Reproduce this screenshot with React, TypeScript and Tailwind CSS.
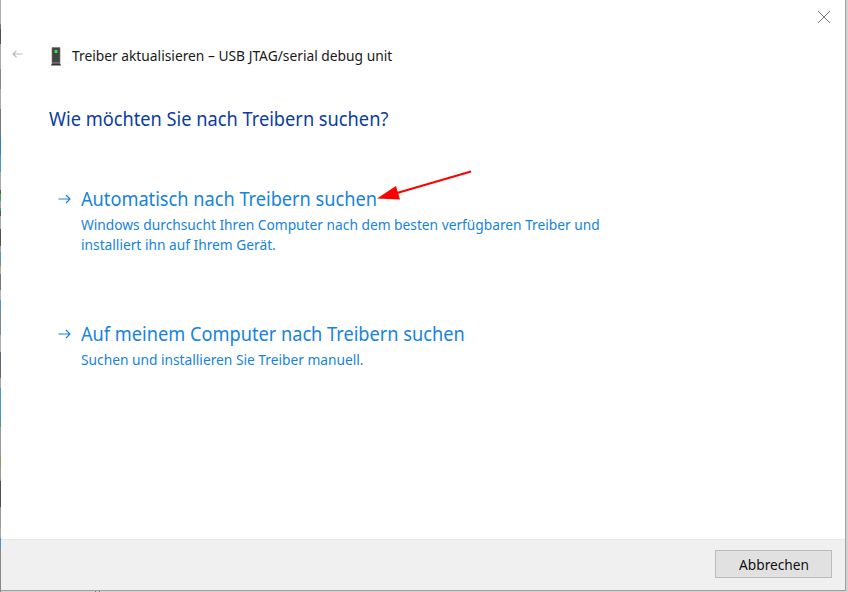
import React from "react";

const edge: [string, number][] = [
  ["bg-[#b0b0b0]", 24], ["bg-[#777777]", 5], ["bg-[#505050]", 15], ["bg-[#aaaaaa]", 25],
  ["bg-[#888888]", 20], ["bg-[#a8a8a8]", 20], ["bg-[#777777]", 27], ["bg-[#2f7fcc]", 19],
  ["bg-[#4b96ca]", 17], ["bg-[#a9a9a9]", 18], ["bg-[#555555]", 4], ["bg-[#3fae4b]", 7],
  ["bg-[#a0a0a0]", 7], ["bg-[#22ad66]", 3], ["bg-[#555555]", 5], ["bg-[#aaaaaa]", 13],
  ["bg-[#505050]", 17], ["bg-[#a0a0a0]", 6], ["bg-[#5596b8]", 14], ["bg-[#d4a52c]", 3],
  ["bg-[#b0b0b0]", 5], ["bg-[#777777]", 16], ["bg-[#b5b5b5]", 10], ["bg-[#4795cc]", 10],
  ["bg-[#7b8794]", 25], ["bg-[#b0b0b0]", 17], ["bg-[#606973]", 26], ["bg-[#a6a6a6]", 10],
  ["bg-[#4795cc]", 34], ["bg-[#45a157]", 5], ["bg-[#999999]", 30], ["bg-[#929969]", 10],
  ["bg-[#999999]", 12], ["bg-[#35c44a]", 2], ["bg-[#505050]", 26], ["bg-[#999999]", 20],
  ["bg-[#d0a02e]", 2], ["bg-[#aaaaaa]", 9], ["bg-[#4795cc]", 10], ["bg-[#888888]", 44],
];

function Arrow({ className }: { className: string }) {
  return (
    <svg className={className} width="13" height="10" viewBox="0 0 13 10" fill="none" stroke="currentColor" strokeWidth="1.1">
      <path d="M0.5 5H12M8 1L12 5L8 9" />
    </svg>
  );
}

function Option({ title, lines, className }: { title: string; lines: string[]; className: string }) {
  return (
    <button className={`flex items-start gap-[10px] text-left text-[#1683de] ${className}`}>
      <Arrow className="mt-[10px] shrink-0" />
      <span className="block whitespace-nowrap">
        <span className="block origin-left scale-x-[0.909] text-[20px] leading-[30px]">{title}</span>
        <span className="block origin-left scale-x-[0.948] text-[14.5px] leading-5">
          {lines.map((line) => (
            <span key={line} className="block">{line}</span>
          ))}
        </span>
      </span>
    </button>
  );
}

export default function App() {
  return (
    <div className="relative flex h-[592px] w-[848px] overflow-hidden bg-[#d2d2d2] font-['Noto_Sans','Open_Sans',sans-serif]">
      <div className="flex w-px shrink-0 flex-col">
        {edge.map(([color, height], i) => (
          <div key={i} className={`shrink-0 ${color}`} style={{ height }} />
        ))}
      </div>
      <div className="flex w-[845px] shrink-0 flex-col">
        <div className="flex h-[591px] flex-col border-r border-b border-[#a0a0a0] bg-white">
          <div className="flex h-[34px] justify-end pt-[11px] pr-[15px]">
            <svg width="12" height="12" viewBox="0 0 12 12" fill="none" stroke="#777" strokeWidth="1">
              <path d="M0 0L12 12M12 0L0 12" />
            </svg>
          </div>
          <header className="flex h-11 items-center pl-[11px]">
            <svg className="-mt-1" width="11" height="8" viewBox="0 0 11 8" fill="none" stroke="#bcbcbc" strokeWidth="1.2">
              <path d="M10.5 4H1M4.5 0.8L1 4L4.5 7.2" />
            </svg>
            <svg className="ml-[28px]" width="10" height="19" viewBox="0 0 10 19">
              <path d="M1 0.5H9V16H1Z" fill="#444" stroke="#777" strokeWidth="0.6" />
              <path d="M1 16H9L10 18.5H0Z" fill="#333" />
              <path d="M1 16H9" stroke="#aaa" strokeWidth="0.7" />
              <rect x="3.5" y="3" width="3" height="3" fill="#2ee62e" />
            </svg>
            <span className="-mt-0.5 ml-[11px] origin-left scale-x-[0.951] whitespace-nowrap text-[14.5px] leading-5 text-[#1a1a1a]">Treiber aktualisieren – USB JTAG/serial debug unit</span>
          </header>
          <main className="flex-1 pl-[48px]">
            <h1 className="mt-[26px] h-[30px] origin-left scale-x-[0.911] whitespace-nowrap text-[20px] leading-[30px] text-[#0a3ca2]">Wie möchten Sie nach Treibern suchen?</h1>
            <div className="mt-[50px] flex flex-col items-start pl-[9px]">
              <Option
                className="h-[135px]"
                title="Automatisch nach Treibern suchen"
                lines={[
                  "Windows durchsucht Ihren Computer nach dem besten verfügbaren Treiber und",
                  "installiert ihn auf Ihrem Gerät.",
                ]}
              />
              <Option
                className=""
                title="Auf meinem Computer nach Treibern suchen"
                lines={["Suchen und installieren Sie Treiber manuell."]}
              />
            </div>
          </main>
          <footer className="flex h-[51px] shrink-0 items-start justify-end border-t border-[#e8e8e8] bg-[#f0f0f0] pt-[10px] pr-[13px]">
            <button className="flex h-7 w-[117px] items-center justify-center border border-[#bcbcbc] bg-[#e1e1e1] pl-px text-[14.5px] leading-5 text-[#111]">
              <span className="scale-x-[0.945]">Abbrechen</span>
            </button>
          </footer>
        </div>
        <div className="flex h-px gap-[3px] pl-[94px]">
          <span className="h-px w-px bg-[#777]" />
          <span className="h-px w-px bg-[#777]" />
        </div>
      </div>
      <svg className="pointer-events-none absolute left-[376px] top-[168px]" width="98" height="34" viewBox="376 168 98 34">
        <path d="M471 171.5L397 193" stroke="#ff0000" strokeWidth="2" />
        <path d="M377 198.5L396 186L400 199.5Z" fill="#ff0000" />
      </svg>
    </div>
  );
}
